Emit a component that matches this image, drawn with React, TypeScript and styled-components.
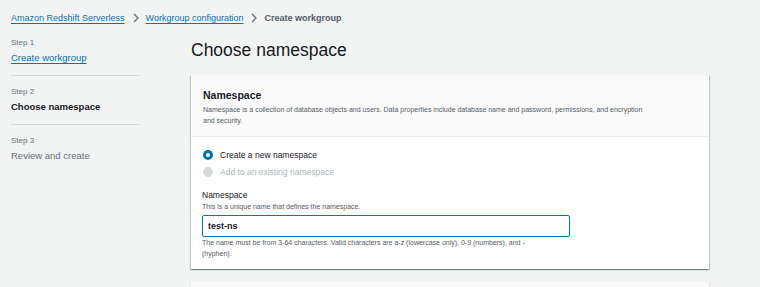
import React, { useState } from 'react';
import styled, { createGlobalStyle } from 'styled-components';

const GlobalStyle = createGlobalStyle`
  html, body {
    margin: 0;
    padding: 0;
    background: #f2f3f3;
    font-family: "Liberation Sans", Arial, sans-serif;
    color: #16191f;
  }
  * {
    box-sizing: border-box;
  }
`;

const Page = styled.div`
  width: 760px;
  height: 287px;
  overflow: hidden;
  background: #f2f3f3;
`;

const Breadcrumbs = styled.nav`
  display: flex;
  align-items: center;
  height: 35px;
  padding: 0 0 0 11px;
  font-size: 9px;
`;

const Crumb = styled.a<{ $current?: boolean }>`
  color: ${(p) => (p.$current ? '#545b64' : '#0073bb')};
  text-decoration: ${(p) => (p.$current ? 'none' : 'underline')};
  text-underline-offset: 2px;
  font-weight: ${(p) => (p.$current ? 700 : 400)};
`;

const Chevron = styled.span`
  display: inline-flex;
  margin: 0 7px 0 8px;
  color: #687078;
`;

const Layout = styled.div`
  display: grid;
  grid-template-columns: 129px 518px;
  column-gap: 51px;
  padding-left: 11px;
`;

const SideNav = styled.ol`
  list-style: none;
  margin: 0;
  padding: 0;
`;

const Step = styled.li<{ $last?: boolean }>`
  padding: 2px 0 9px;
  border-bottom: ${(p) => (p.$last ? 'none' : '1px solid #d5dbdb')};
  margin-bottom: 8px;
`;

const StepNumber = styled.div`
  font-size: 8px;
  color: #687078;
  line-height: 12px;
`;

const StepLabel = styled.div<{ $state: 'done' | 'active' | 'todo' }>`
  font-size: 9.5px;
  line-height: 16px;
  margin-top: 1px;
  color: ${(p) => (p.$state === 'done' ? '#0073bb' : p.$state === 'active' ? '#16191f' : '#687078')};
  font-weight: ${(p) => (p.$state === 'active' ? 700 : 400)};
  text-decoration: ${(p) => (p.$state === 'done' ? 'underline' : 'none')};
  text-underline-offset: 2px;
`;

const Main = styled.main``;

const Title = styled.h1`
  margin: 3px 0 13px;
  font-size: 17.5px;
  font-weight: 400;
  line-height: 24px;
  color: #16191f;
`;

const Card = styled.section`
  background: #ffffff;
  box-shadow: 0 1px 1px 0 rgba(0, 28, 36, 0.3), 1px 1px 1px 0 rgba(0, 28, 36, 0.15),
    -1px 1px 1px 0 rgba(0, 28, 36, 0.15);
  margin-bottom: 13px;
`;

const CardHeader = styled.header`
  background: #fafafa;
  border-bottom: 1px solid #eaeded;
  padding: 13px 12px 10px;
`;

const CardTitle = styled.h2`
  margin: 0 0 2px;
  font-size: 10.5px;
  font-weight: 700;
  line-height: 14px;
`;

const CardDescription = styled.p`
  margin: 0;
  max-width: 452px;
  font-size: 7px;
  line-height: 11px;
  color: #545b64;
`;

const CardBody = styled.div`
  padding: 11px 11px 10px;
`;

const RadioGroup = styled.div`
  display: flex;
  flex-direction: column;
  gap: 3px;
  margin-bottom: 10px;
`;

const RadioRow = styled.label<{ $disabled?: boolean }>`
  display: flex;
  align-items: center;
  gap: 7px;
  height: 14px;
  padding-left: 1px;
  font-size: 8.5px;
  color: ${(p) => (p.$disabled ? '#aab7b8' : '#16191f')};
`;

const RadioDot = styled.span<{ $checked?: boolean; $disabled?: boolean }>`
  width: 10px;
  height: 10px;
  border-radius: 50%;
  flex: none;
  background: ${(p) => (p.$disabled ? '#d5dbdb' : '#ffffff')};
  border: ${(p) => (p.$checked ? '3px solid #0073bb' : p.$disabled ? '1px solid #d5dbdb' : '1px solid #687078')};
`;

const FieldLabel = styled.div`
  font-size: 8.5px;
  line-height: 12px;
  color: #16191f;
`;

const FieldHint = styled.div`
  font-size: 7px;
  line-height: 11px;
  color: #545b64;
  margin-bottom: 3px;
`;

const TextInput = styled.input`
  display: block;
  width: 368px;
  height: 22px;
  padding: 0 5px;
  border: 1.5px solid #0073bb;
  border-radius: 2px;
  font-family: inherit;
  font-size: 9px;
  font-weight: 700;
  color: #16191f;
  outline: none;
  margin-bottom: 0;
`;

const FieldConstraint = styled.div`
  width: 340px;
  font-size: 7px;
  line-height: 11px;
  color: #545b64;
`;

const NextCard = styled.section`
  background: #fafafa;
  height: 20px;
  box-shadow: 0 1px 1px 0 rgba(0, 28, 36, 0.3);
`;

const ChevronIcon = () => (
  <svg width="6" height="10" viewBox="0 0 6 10" fill="none">
    <path d="M1 1l4 4-4 4" stroke="currentColor" strokeWidth="1.3" />
  </svg>
);

export default function App() {
  const [value, setValue] = useState('test-ns');

  return (
    <Page>
      <GlobalStyle />
      <Breadcrumbs>
        <Crumb href="#">Amazon Redshift Serverless</Crumb>
        <Chevron>
          <ChevronIcon />
        </Chevron>
        <Crumb href="#">Workgroup configuration</Crumb>
        <Chevron>
          <ChevronIcon />
        </Chevron>
        <Crumb $current>Create workgroup</Crumb>
      </Breadcrumbs>
      <Layout>
        <SideNav>
          <Step>
            <StepNumber>Step 1</StepNumber>
            <StepLabel $state="done">Create workgroup</StepLabel>
          </Step>
          <Step>
            <StepNumber>Step 2</StepNumber>
            <StepLabel $state="active">Choose namespace</StepLabel>
          </Step>
          <Step $last>
            <StepNumber>Step 3</StepNumber>
            <StepLabel $state="todo">Review and create</StepLabel>
          </Step>
        </SideNav>
        <Main>
          <Title>Choose namespace</Title>
          <Card>
            <CardHeader>
              <CardTitle>Namespace</CardTitle>
              <CardDescription>
                Namespace is a collection of database objects and users. Data properties include database
                name and password, permissions, and encryption and security.
              </CardDescription>
            </CardHeader>
            <CardBody>
              <RadioGroup>
                <RadioRow>
                  <RadioDot $checked />
                  Create a new namespace
                </RadioRow>
                <RadioRow $disabled>
                  <RadioDot $disabled />
                  Add to an existing namespace
                </RadioRow>
              </RadioGroup>
              <FieldLabel>Namespace</FieldLabel>
              <FieldHint>This is a unique name that defines the namespace.</FieldHint>
              <TextInput value={value} onChange={(e) => setValue(e.target.value)} />
              <FieldConstraint>
                The name must be from 3-64 characters. Valid characters are a-z (lowercase only), 0-9
                (numbers), and - (hyphen).
              </FieldConstraint>
            </CardBody>
          </Card>
          <NextCard />
        </Main>
      </Layout>
    </Page>
  );
}
